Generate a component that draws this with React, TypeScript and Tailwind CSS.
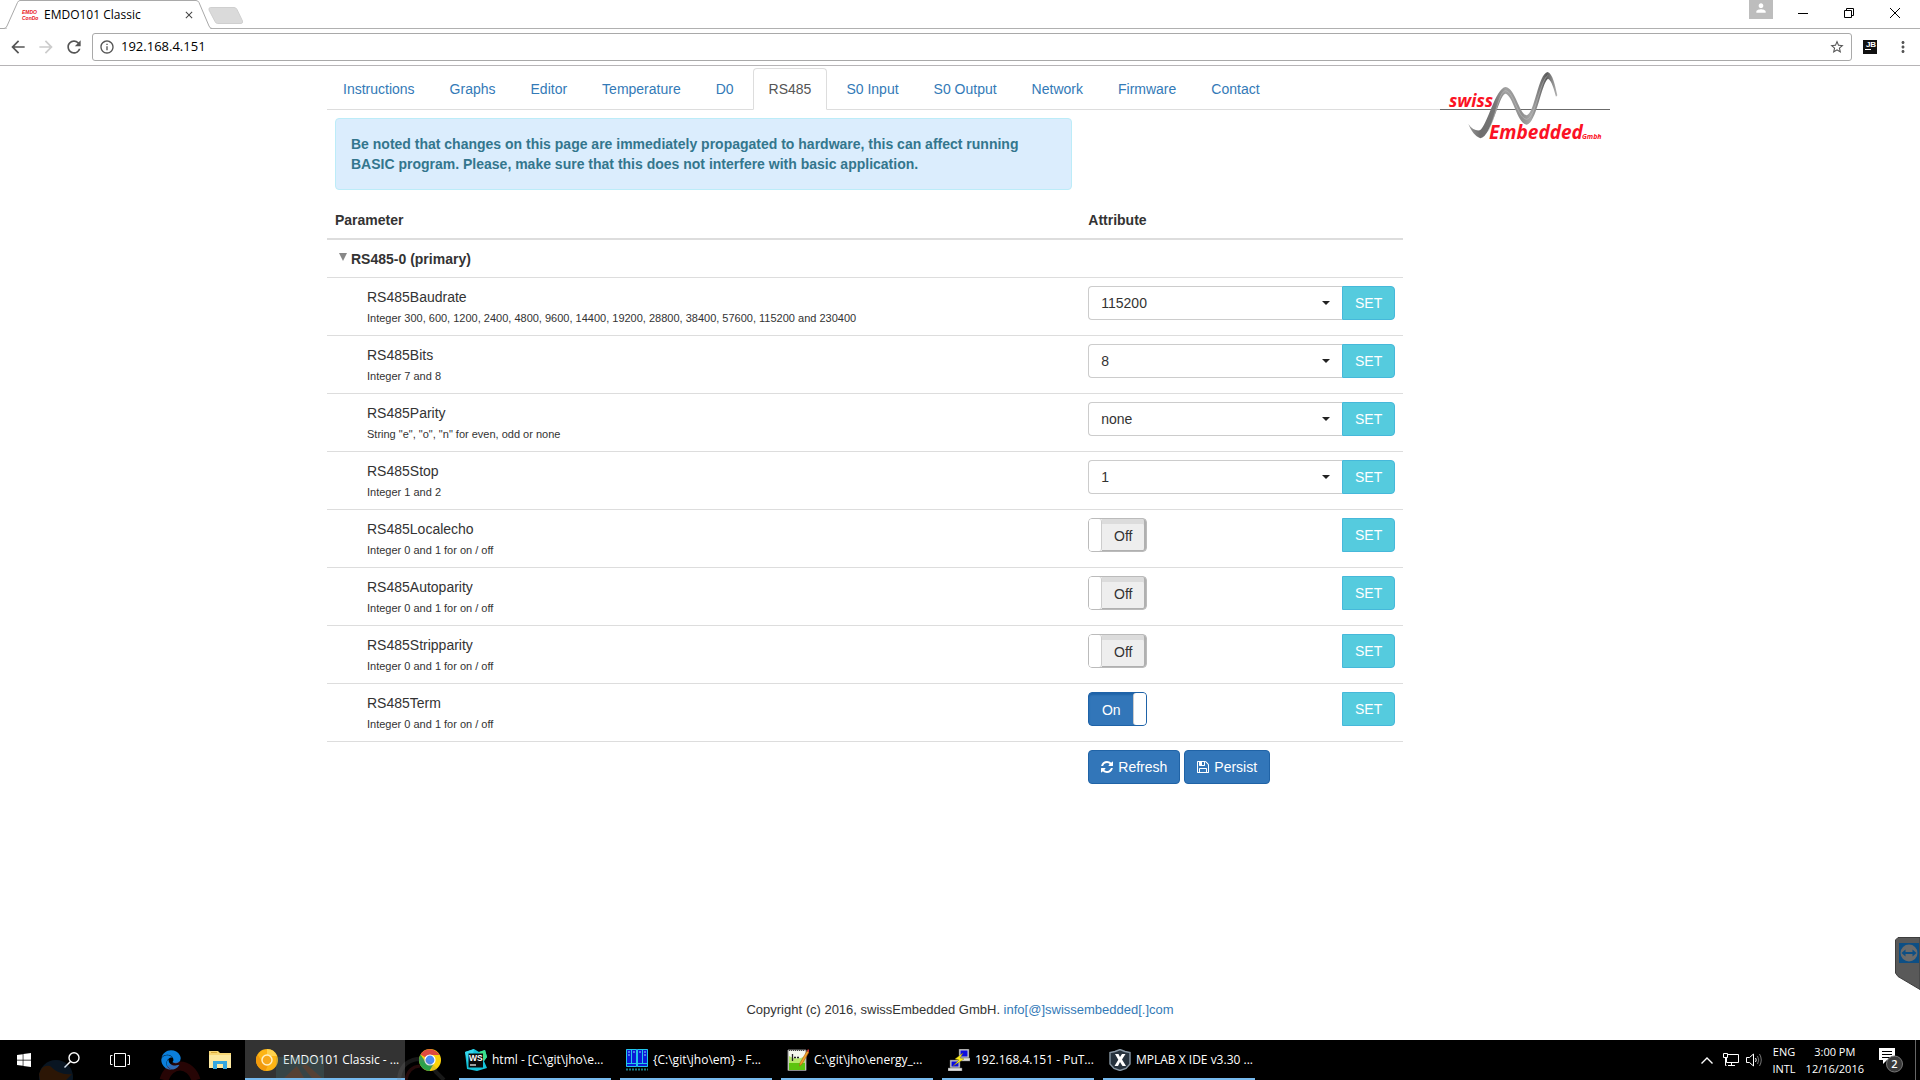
import { useState } from "react";
import type { ReactNode } from "react";
import { MdArrowBack, MdArrowForward, MdRefresh, MdInfoOutline, MdStarBorder, MdMoreVert, MdClose, MdPerson } from "react-icons/md";
import { FaEdge, FaWindows } from "react-icons/fa";

const tabs = ["Instructions", "Graphs", "Editor", "Temperature", "D0", "RS485", "S0 Input", "S0 Output", "Network", "Firmware", "Contact"];

type Row = { name: string; hint: string; options?: string[]; value?: string; on?: boolean };

const rows: Row[] = [
  { name: "RS485Baudrate", hint: "Integer 300, 600, 1200, 2400, 4800, 9600, 14400, 19200, 28800, 38400, 57600, 115200 and 230400", options: ["300", "600", "1200", "2400", "4800", "9600", "14400", "19200", "28800", "38400", "57600", "115200", "230400"], value: "115200" },
  { name: "RS485Bits", hint: "Integer 7 and 8", options: ["7", "8"], value: "8" },
  { name: "RS485Parity", hint: 'String "e", "o", "n" for even, odd or none', options: ["even", "odd", "none"], value: "none" },
  { name: "RS485Stop", hint: "Integer 1 and 2", options: ["1", "2"], value: "1" },
  { name: "RS485Localecho", hint: "Integer 0 and 1 for on / off", on: false },
  { name: "RS485Autoparity", hint: "Integer 0 and 1 for on / off", on: false },
  { name: "RS485Stripparity", hint: "Integer 0 and 1 for on / off", on: false },
  { name: "RS485Term", hint: "Integer 0 and 1 for on / off", on: true },
];

function BrowserChrome() {
  return (
    <header className="font-['Open_Sans',sans-serif] text-black">
      <div className="relative flex h-[29px] items-start justify-between">
        <div className="absolute inset-x-0 bottom-0 h-px bg-[#b0b0b0]" />
        <div className="relative flex">
          <div className="relative flex h-[29px] w-[212px] items-center pr-[17px] pl-[22px]">
            <svg className="absolute inset-0 h-[29px] w-[212px]" viewBox="0 0 212 29" aria-hidden="true">
              <path d="M0 28.5H4Q6 28.5 7 26L17.500 2.500Q18.500 .5 20 .5H196Q198 .5 199 2.500L209 26Q210 28.500 212 28.500V29H0Z" fill="#fff" stroke="#a9a9a9" />
              <path d="M7 29V28H210V29Z" fill="#fff" />
            </svg>
            <span className="relative w-[22px] font-['Liberation_Sans',sans-serif] text-[5px] leading-[6px] font-bold text-[#e8131b] italic">
              EMDO<br />ConDo
            </span>
            <span className="relative flex-1 text-[12px]">EMDO101 Classic</span>
            <button className="relative" aria-label="Close tab">
              <MdClose className="size-[12px] text-[#444]" />
            </button>
          </div>
          <button aria-label="New tab" className="-ml-[4px] mt-[7px] h-[17px]">
            <svg width="35" height="17" viewBox="0 0 35 17">
              <path d="M2.500 .5H26Q28 .5 29 2.500L34.500 14Q35 16.500 33 16.500H9.500Q8 16.500 7 14.500L1 3Q.5 .5 2.500 .5Z" fill="#dadada" stroke="#cfcfcf" />
            </svg>
          </button>
        </div>
        <div className="relative flex pr-[19px]">
          <button aria-label="Profile" className="mr-6 flex h-[19px] w-6 justify-center bg-[#bdbdbd] text-white">
            <MdPerson className="mt-px size-[14px]" />
          </button>
          <button aria-label="Minimize" className="mr-[34px] h-[26px]">
            <svg width="12" height="12" viewBox="0 0 12 12" stroke="#000"><path d="M1 6.500H11" /></svg>
          </button>
          <button aria-label="Restore" className="mr-[34px] h-[26px]">
            <svg width="12" height="12" viewBox="0 0 12 12" fill="none" stroke="#000"><path d="M1.500 3.500H8.500V10.500H1.500ZM3.500 3.500V1.500H10.500V8.500H8.500" /></svg>
          </button>
          <button aria-label="Close" className="h-[26px]">
            <svg width="12" height="12" viewBox="0 0 12 12" fill="none" stroke="#000"><path d="M1 1L11 11M11 1L1 11" /></svg>
          </button>
        </div>
      </div>
      <div className="flex h-[37px] items-center border-b border-[#b6b4b6] pr-2 pl-2 text-[#555]">
        <button aria-label="Back" className="mr-2"><MdArrowBack className="size-5" /></button>
        <button aria-label="Forward" className="mr-2"><MdArrowForward className="size-5 text-[#ccc]" /></button>
        <button aria-label="Reload" className="mr-2"><MdRefresh className="size-5" /></button>
        <div className="flex h-7 flex-1 items-center rounded-[3px] border border-[#a9a9a9] px-[6px]">
          <MdInfoOutline className="size-4" />
          <input aria-label="Address" defaultValue="192.168.4.151" className="ml-[6px] min-w-0 flex-1 bg-transparent text-[13px] text-black outline-none" />
          <button aria-label="Bookmark"><MdStarBorder className="size-4" /></button>
        </div>
        <button aria-label="JetBrains extension" className="ml-[11px] flex size-[14px] flex-col bg-[#111] pl-[2px] font-['Liberation_Sans',sans-serif] text-[8px] leading-[9px] font-bold text-white">
          JB
          <span className="h-px w-[6px] bg-white" />
        </button>
        <button aria-label="Menu" className="ml-[17px]"><MdMoreVert className="size-[18px]" /></button>
      </div>
    </header>
  );
}

function Logo() {
  return (
    <svg className="absolute top-[4px] -right-[18px] h-[86px] w-[175px] overflow-visible" viewBox="48 30 525 258" role="img" aria-label="swissEmbedded GmbH">
      <defs>
        <linearGradient id="wave" x1="0" x2="1" y1="0" y2="0">
          <stop offset="0" stopColor="#9a9a9a" />
          <stop offset=".14" stopColor="#6e6e6e" />
          <stop offset=".3" stopColor="#777" />
          <stop offset=".42" stopColor="#a2a2a2" />
          <stop offset=".6" stopColor="#8f8f8f" />
          <stop offset=".7" stopColor="#a6a6a6" />
          <stop offset=".88" stopColor="#5c5c5c" />
          <stop offset="1" stopColor="#b5b5b5" />
        </linearGradient>
      </defs>
      <path d="M60 148.500H570" stroke="#6b6b6b" strokeWidth="3" />
      <path d="M145 192C156 208 168 213 180 211C202 196 226 84 257 81C286 84 297 162 320 166C344 160 355 40 383 36C398 40 406 78 412 106L408 110C402 88 395 61 384 56C364 70 350 188 320 194C290 188 280 106 256 101C236 106 216 228 181 235C165 228 155 215 145 192Z" fill="url(#wave)" />
      <path d="M205 212C226 176 236 94 257 92C282 96 292 174 320 178C346 174 360 62 383 47" fill="none" stroke="#c4c4c4" strokeWidth="1.500" />
      <g fill="#fb1224" fontFamily="'Open Sans', sans-serif" fontWeight="700" fontStyle="italic">
        <text x="87" y="141" fontSize="53">swiss</text>
        <text x="207" y="236" fontSize="57">Embedded</text>
        <text x="486" y="236" fontSize="21">Gmbh</text>
      </g>
    </svg>
  );
}

function Toggle({ name, initial }: { name: string; initial: boolean }) {
  const [on, setOn] = useState(initial);
  return (
    <label className="flex h-[34px] w-[59px] cursor-pointer overflow-hidden rounded-[4px] text-center leading-[34px]">
      <input type="checkbox" role="switch" aria-label={name} checked={on} onChange={() => setOn(!on)} className="sr-only" />
      {on ? (
        <span className="flex flex-1 rounded-[4px] border border-[#1f63a8] bg-[#3276b9] text-white shadow-[inset_0_2px_2px_#1f63a8]">
          <span className="flex-1">On</span>
          <span className="w-[13px] rounded-[3px] border-l border-[#ccc] bg-white" />
        </span>
      ) : (
        <span className="flex flex-1 rounded-[4px] border border-[#bbb] bg-[#eee] text-[#333]">
          <span className="w-[13px] rounded-[3px] border-r border-[#ccc] bg-white" />
          <span className="flex-1 rounded-r-[3px] border-r-2 border-b border-[#b0b0b0] shadow-[inset_0_5px_0_#dcdcdc]">Off</span>
        </span>
      )}
    </label>
  );
}

function SetButton({ name }: { name: string }) {
  return (
    <button aria-label={`SET ${name}`} className="h-[34px] w-[53px] shrink-0 rounded-r-[4px] border border-[#46b8da] bg-[#55cbde] text-white">
      SET
    </button>
  );
}

function ParamTable() {
  return (
    <table className="mt-3 w-[85%] table-fixed border-separate border-spacing-0 text-left">
      <thead>
        <tr>
          <th className="w-[70%] border-b-2 border-[#ddd] p-2">Parameter</th>
          <th className="border-b-2 border-[#ddd] p-2">Attribute</th>
        </tr>
      </thead>
      <tbody>
        <tr>
          <th colSpan={2} className="p-2 pt-[9px] pl-3">
            <button className="flex items-start font-bold">
              <svg className="mt-1 mr-1" width="8" height="8" viewBox="0 0 8 8" aria-hidden="true"><path d="M0 0H8L4 8Z" fill="#888" /></svg>
              RS485-0 (primary)
            </button>
          </th>
        </tr>
        {rows.map((r) => (
          <tr key={r.name} className="align-top">
            <td className="border-t border-[#ddd] p-2 pl-10">
              <div className="leading-[22px]">{r.name}</div>
              <div className="h-[19px] text-[11px] leading-[20px]">{r.hint}</div>
            </td>
            <td className="border-t border-[#ddd] p-2">
              <div className="flex justify-between">
                {r.options ? (
                  <div className="relative flex-1">
                    <select aria-label={r.name} defaultValue={r.value} className="h-[34px] w-full appearance-none rounded-l-[4px] border border-r-0 border-[#ccc] bg-white pl-3 text-[14px] outline-none">
                      {r.options.map((o) => <option key={o}>{o}</option>)}
                    </select>
                    <svg className="pointer-events-none absolute top-[15px] right-3" width="8" height="4" viewBox="0 0 8 4" aria-hidden="true"><path d="M0 0H8L4 4Z" fill="#222" /></svg>
                  </div>
                ) : (
                  <Toggle name={r.name} initial={!!r.on} />
                )}
                <SetButton name={r.name} />
              </div>
            </td>
          </tr>
        ))}
        <tr>
          <td className="border-t border-[#ddd]" />
          <td className="border-t border-[#ddd] p-2">
            <div className="flex gap-1 text-white">
              <button className="flex h-[34px] items-center gap-[5px] rounded-[4px] border border-[#2063a6] bg-[#3276b9] px-3">
                <svg width="12" height="14" viewBox="0 0 1536 1792" fill="currentColor" aria-hidden="true"><path d="M1511 1056q0 5-1 7-64 268-268 434.500t-478 166.500q-146 0-282.500-55t-243.500-157l-129 129q-19 19-45 19t-45-19-19-45v-448q0-26 19-45t45-19h448q26 0 45 19t19 45-19 45l-137 137q71 66 161 102t187 36q134 0 250-65t186-179q11-17 53-117 8-23 30-23h192q13 0 22.500 9.500t9.500 22.500zm25-800v448q0 26-19 45t-45 19h-448q-26 0-45-19t-19-45 19-45l138-138q-148-137-349-137-134 0-250 65t-186 179q-11 17-53 117-8 23-30 23h-199q-13 0-22.500-9.500t-9.500-22.500v-7q65-268 270-434.500t480-166.500q146 0 284 55.500t245 156.500l130-129q19-19 45-19t45 19 19 45z" /></svg>
                Refresh
              </button>
              <button className="flex h-[34px] items-center gap-[5px] rounded-[4px] border border-[#2063a6] bg-[#3276b9] px-3">
                <svg width="12" height="14" viewBox="0 0 1536 1792" fill="currentColor" aria-hidden="true"><path d="M384 1536h768v-384h-768v384zm896 0h128v-896q0-14-10-38.500t-20-34.500l-281-281q-10-10-34-20t-39-10v416q0 40-28 68t-68 28h-576q-40 0-68-28t-28-68v-416h-128v1280h128v-416q0-40 28-68t68-28h832q40 0 68 28t28 68v416zm-384-928v-320q0-13-9.500-22.500t-22.500-9.500h-192q-13 0-22.500 9.500t-9.500 22.500v320q0 13 9.500 22.500t22.500 9.500h192q13 0 22.500-9.500t9.500-22.500zm640 32v928q0 40-28 68t-68 28h-1344q-40 0-68-28t-28-68v-1344q0-40 28-68t68-28h928q40 0 88 20t76 48l280 280q28 28 48 76t20 88z" /></svg>
                Persist
              </button>
            </div>
          </td>
        </tr>
      </tbody>
    </table>
  );
}

const chromiumIcon = (
  <svg width="22" height="22" viewBox="0 0 22 22">
    <circle cx="11" cy="11" r="11" fill="#fdb515" />
    <path d="M11 0A11 11 0 0 1 21 7H11Z" fill="#ffd24d" />
    <path d="M1.500 5.500L6.500 13A5 5 0 0 0 12 16L9.500 22A11 11 0 0 1 1.500 5.500Z" fill="#f29a0c" />
    <circle cx="11" cy="11" r="5" fill="#f7a81b" stroke="#fff0c4" strokeWidth="1.500" />
  </svg>
);

const chromeIcon = (
  <svg width="22" height="22" viewBox="0 0 22 22">
    <circle cx="11" cy="11" r="11" fill="#fcd209" />
    <path d="M11 11L1.500 5.500A11 11 0 0 1 20.500 6H11Z" fill="#e04a3f" />
    <path d="M1.500 5.500A11 11 0 0 0 10.500 22L15.300 13.500L11 11L6.700 13.500Z" fill="#2ca14b" />
    <circle cx="11" cy="11" r="5" fill="#4a8bf5" stroke="#fff" strokeWidth="1.200" />
  </svg>
);

const webstormIcon = (
  <svg width="22" height="22" viewBox="0 0 22 22">
    <path d="M0 3L9 0L14 3L20 1L22 8L19 12L22 19L12 22L2 20Z" fill="#14c3da" />
    <path d="M14 3L20 1L22 8L19 12Z" fill="#3be08a" />
    <path d="M0 3L9 0L8 5L3 14Z" fill="#35d7ee" />
    <path d="M3.500 4.500H18V18.500H3.500Z" fill="#0a0a0a" />
    <text x="4" y="12" fontSize="8.500" fontWeight="700" fontFamily="'Liberation Sans', sans-serif" fill="#fff">WS</text>
    <path d="M5 16H11" stroke="#fff" strokeWidth="1.200" />
  </svg>
);

const farIcon = (
  <svg width="22" height="22" viewBox="0 0 22 22">
    <path d="M0 0H22V18H0Z" fill="#0a1bd6" />
    <path d="M.5 .5H10.500V17.500H.5ZM11.500 .5H21.500V17.500H11.500ZM5.500 0V14M16.500 0V14M0 14.500H22" stroke="#22c7ea" fill="none" />
    <path d="M2 3H4M2 6H4M7 3H9M13 3H15M18 3H20M18 6H20" stroke="#8fd8ff" />
    <path d="M0 20.500H22" stroke="#1d7c85" strokeWidth="2" strokeDasharray="2 1" />
  </svg>
);

const notepadIcon = (
  <svg width="22" height="22" viewBox="0 0 22 22">
    <path d="M1 1H19V21.500H1Z" fill="#f4f7ee" stroke="#8a8a8a" />
    <path d="M2 12Q10 9 18 11V21H2Z" fill="#5cc40f" />
    <path d="M2 7Q10 12 18 7V14H2Z" fill="#b5e86a" />
    <path d="M5.500 5V12M7 8.500H9M10 8.500H12" stroke="#222" strokeWidth="1.300" />
    <path d="M13 14L20 2L22 3L15 15L12.500 17Z" fill="#f3a32b" stroke="#a85b13" strokeWidth=".6" />
    <path d="M20 2L21 0L22 1V3Z" fill="#d33" />
    <path d="M2 1.500H18" stroke="#444" strokeDasharray="1 1" />
  </svg>
);

const puttyIcon = (
  <svg width="22" height="22" viewBox="0 0 22 22">
    <path d="M11 0H21V9H11ZM2 11H12V19H2Z" fill="#c9c9c9" stroke="#555" strokeWidth=".5" />
    <path d="M12.500 1.500H19.500V7.500H12.500ZM3.500 12.500H10.500V17.500H3.500Z" fill="#0c0ce0" />
    <path d="M9 9H22V12H13ZM0 19H14V22H0Z" fill="#e2e2e2" stroke="#666" strokeWidth=".5" />
    <path d="M15 4L7 10L11 11L5 17L16 10L12 9Z" fill="#ffee1a" stroke="#7a6f00" strokeWidth=".4" />
  </svg>
);

const mplabIcon = (
  <svg width="22" height="22" viewBox="0 0 22 22">
    <path d="M11 .5L16 2.500L21 3.500V15L17 19.500L11 21.500L5 19.500L1 15V3.500L6 2.500Z" fill="#26323d" stroke="#8796a3" strokeWidth="1.400" />
    <path d="M6 5H9.500L11 8L13 5H16.500L13 10.500L17 17H13.500L11 13L9 17H5.500L9.300 10.800Z" fill="#fff" />
  </svg>
);

type Task = { label: string; icon: ReactNode };
const tasks: Task[] = [
  { label: "html - [C:\\git\\jho\\e...", icon: webstormIcon },
  { label: "{C:\\git\\jho\\em} - F...", icon: farIcon },
  { label: "C:\\git\\jho\\energy_...", icon: notepadIcon },
  { label: "192.168.4.151 - PuT...", icon: puttyIcon },
  { label: "MPLAB X IDE v3.30 ...", icon: mplabIcon },
];

function Taskbar() {
  return (
    <footer className="relative flex h-10 shrink-0 justify-between overflow-hidden bg-black font-['Open_Sans',sans-serif] text-[12px] text-white">
      <nav aria-label="Taskbar" className="flex">
        <button aria-label="Start" className="flex w-12 items-center justify-center"><FaWindows className="size-4" /></button>
        <button aria-label="Search" className="flex w-12 items-center justify-center">
          <svg width="16" height="16" viewBox="0 0 16 16" fill="none" stroke="#fff" strokeWidth="1.400"><circle cx="10" cy="5.800" r="5" /><path d="M6.500 9.500L.5 15.500" /></svg>
        </button>
        <button aria-label="Task view" className="flex w-12 items-center justify-center">
          <svg width="20" height="14" viewBox="0 0 20 14" fill="none" stroke="#fff"><path d="M4.500 .5H15.500V13.500H4.500ZM2.500 2.500H.5V11.500H2.500M17.500 2.500H19.500V11.500H17.500" /></svg>
        </button>
        <button aria-label="Edge" className="ml-[3px] flex w-12 items-center justify-center"><FaEdge className="size-5 text-[#0b7fdc]" /></button>
        <button aria-label="File Explorer" className="flex w-[50px] items-center pl-[14px]">
          <svg width="22" height="18" viewBox="0 0 22 18"><path d="M0 0H9L11 2H22V17H0Z" fill="#f8d775" /><path d="M0 4H22V17H0Z" fill="#fde9a0" /><path d="M4 18V10H18V18H14V13H8V18Z" fill="#35a8e0" /><path d="M2 1.500H8" stroke="#d8a93a" /></svg>
        </button>
        <button className="flex w-40 items-center gap-[5px] border-b-2 border-[#76b9ed] bg-[#333] pt-[2px] pl-[11px] whitespace-nowrap">
          {chromiumIcon}EMDO101 Classic - ...
        </button>
        <button aria-label="Chrome" className="flex w-[54px] items-center pl-[14px]">{chromeIcon}</button>
        <div className="flex gap-[9px]">
          {tasks.map((t) => (
            <button key={t.label} className="flex w-[152px] items-center gap-[5px] border-b-2 border-[#76b9ed] pt-[2px] pl-[6px] whitespace-nowrap">
              {t.icon}{t.label}
            </button>
          ))}
        </div>
      </nav>
      <svg className="pointer-events-none absolute bottom-0 left-0 h-10 w-[460px] opacity-20" viewBox="0 0 460 40" aria-hidden="true">
        <circle cx="56" cy="37" r="17" fill="#2d6ba8" />
        <path d="M39 34Q42 24 50 26Q60 36 72 34L66 40H40Z" fill="#d9701c" />
        <path d="M164 40A17 21 0 0 1 196 40" fill="none" stroke="#c01a1a" strokeWidth="9" />
        <path d="M276 17H324V38H276Z" fill="#4a8f95" />
        <path d="M284 38L297 26L304 38ZM302 26L312 38H322L306 24Z" fill="#e07a3c" />
        <path d="M399 40Q400 22 417 19Q430 20 436 32L444 40" fill="none" stroke="#777" strokeWidth="4" />
        <path d="M406 40Q408 27 420 26" fill="none" stroke="#bb3333" strokeWidth="3" />
      </svg>
      <div className="flex items-center">
        <button aria-label="Show hidden icons">
          <svg width="12" height="7" viewBox="0 0 12 7" fill="none" stroke="#fff" strokeWidth="1.400"><path d="M.5 6.500L6 1L11.500 6.500" /></svg>
        </button>
        <svg className="ml-[10px]" width="16" height="14" viewBox="0 0 16 14" fill="none" stroke="#fff" role="img" aria-label="Network"><path d="M5 1.500H15.500V9.500H3.500V5M.5 .5H4.500V4.500H.5ZM2.500 4.500V12.500H3.500M8.500 9.500V12.500M5 12.500H12" /></svg>
        <svg className="ml-[7px]" width="17" height="14" viewBox="0 0 17 14" fill="none" stroke="#fff" role="img" aria-label="Volume"><path d="M.5 4.500H3.500L7.500 1V13L3.500 9.500H.5Z" /><path d="M9.500 5Q11 7 9.500 9" /><path d="M11.500 3Q14 7 11.500 11M13.500 1Q17 7 13.500 13" stroke="#777" /></svg>
        <div className="ml-[9px] text-center text-[11px] leading-[17px]">ENG<br />INTL</div>
        <div className="ml-[10px] text-center text-[11px] leading-[17px]">3:00 PM<br />12/16/2016</div>
        <button aria-label="Notifications" className="ml-[15px]">
          <svg width="25" height="26" viewBox="0 0 25 26">
            <path d="M0 1H16V13H8L4 17V13H0Z" fill="#fff" />
            <path d="M3 4.500H13M3 7.500H13M3 10.500H13" stroke="#000" />
            <circle cx="15.500" cy="17" r="8" fill="#3a3a3a" stroke="#777" />
            <text x="15.500" y="21" fontSize="11" textAnchor="middle" fontFamily="'Open Sans', sans-serif" fontWeight="600" fill="#fff">2</text>
          </svg>
        </button>
        <div className="mr-1 ml-[11px] h-10 w-px bg-[#666]" />
      </div>
    </footer>
  );
}

export default function App() {
  return (
    <div className="flex min-h-screen flex-col bg-white">
      <BrowserChrome />
      <main className="relative flex flex-1 flex-col font-['Liberation_Sans',Arial,sans-serif] text-[14px] leading-[20px] text-[#333]">
        <div className="relative mx-auto w-full max-w-[1266px] pt-[2px]">
          <nav className="flex gap-[3px] border-b border-[#ddd]">
            {tabs.map((t) => (
              <a
                key={t}
                href="#"
                className={
                  t === "RS485"
                    ? "-mb-px rounded-t-[4px] border border-[#ddd] border-b-white bg-white px-[15px] py-[10px] text-[#555]"
                    : "-mb-px border border-transparent px-[15px] py-[10px] text-[#337ab7]"
                }
              >
                {t}
              </a>
            ))}
          </nav>
          <Logo />
          <div className="w-[85%] px-2 pt-2">
            <div role="alert" className="max-w-[737px] rounded-[4px] border border-[#bcecf8] bg-[#dbedfd] p-[15px] font-bold text-[#33768d]">
              Be noted that changes on this page are immediately propagated to hardware, this can affect running BASIC program. Please, make sure that this does not interfere with basic application.
            </div>
          </div>
          <ParamTable />
        </div>
        <p className="mt-auto pb-5 text-center text-[13px]">
          Copyright (c) 2016, swissEmbedded GmbH. <a href="#" className="text-[#337ab7]">info[@]swissembedded[.]com</a>
        </p>
        <button aria-label="TeamViewer" className="absolute right-0 bottom-[50px]">
          <svg width="25" height="53" viewBox="0 0 25 53">
            <path d="M3 .5H25V52.500L3 39.500L.5 36V3Z" fill="#595959" stroke="#3d3d3d" />
            <path d="M4 6H24V26H4Z" fill="#0d4f85" />
            <circle cx="14" cy="16" r="8.500" fill="#6b6b6b" />
            <path d="M6.500 16L10.500 12.500V15H17.500V12.500L21.500 16L17.500 19.500V17H10.500V19.500Z" fill="#0d4f85" />
          </svg>
        </button>
      </main>
      <Taskbar />
    </div>
  );
}
